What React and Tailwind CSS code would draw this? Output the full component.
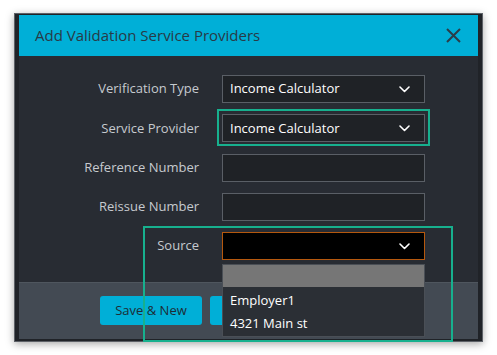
import React from 'react';

const font = { fontFamily: '"Open Sans", "Noto Sans", sans-serif' };

function Chevron() {
  return (
    <svg width="11" height="7" viewBox="0 0 11 7" fill="none" className="shrink-0">
      <path d="M1 1l4.5 4.5L10 1" stroke="#ffffff" strokeWidth="1.6" strokeLinecap="round" strokeLinejoin="round" />
    </svg>
  );
}

function Select({ value, open }) {
  return (
    <div
      className={`flex h-[28px] items-center justify-between pl-[7px] pr-[14px] text-[13px] font-medium text-white ${
        open ? 'bg-black border border-[#b5580e]' : 'bg-[#1f2226] border border-[#5a5f66]'
      }`}
    >
      <span>{value}</span>
      <Chevron />
    </div>
  );
}

function Field({ label, children }) {
  return (
    <>
      <div className="text-right text-[13px] text-[#c6cacf]">{label}</div>
      {children}
    </>
  );
}

export default function App() {
  return (
    <div className="min-h-[355px] w-[497px] bg-white pt-[13px]" style={font}>
      <div className="relative ml-[14px] w-[469px] border border-[#5d6167] bg-[#202328] px-[4px] pt-[1px] pb-[2px] shadow-[0_2px_8px_rgba(0,0,0,0.35)]">
        <div className="w-[459px]">
          <div className="flex h-[41px] items-center justify-between bg-[#00afd7] pl-[16px] pr-[17px]">
            <span className="text-[15px] text-[#283a46]">Add Validation Service Providers</span>
            <svg width="15" height="15" viewBox="0 0 15 15" fill="none">
              <path d="M1 1l13 13M14 1L1 14" stroke="#2b3d48" strokeWidth="2" />
            </svg>
          </div>

          <div className="h-[226px] bg-[#282c33] pt-[19px]">
            <div className="grid grid-cols-[180px_203px] items-center gap-x-[23px] gap-y-[11.25px]">
              <Field label="Verification Type">
                <Select value="Income Calculator" />
              </Field>
              <Field label="Service Provider">
                <Select value="Income Calculator" />
              </Field>
              <Field label="Reference Number">
                <div className="h-[28px] border border-[#5a5f66] bg-[#1f2226]" />
              </Field>
              <Field label="Reissue Number">
                <div className="h-[28px] border border-[#5a5f66] bg-[#1f2226]" />
              </Field>
              <Field label="Source">
                <div className="relative z-10">
                  <Select value="" open />
                  <div className="absolute left-0 top-[32px] w-[203px] border border-[#4a4f56] bg-[#2b2f35] text-[13px] font-medium text-white">
                    <div className="h-[22px] bg-[#767676]" />
                    <div className="flex h-[25px] items-center pl-[7px] pt-[3px]">Employer1</div>
                    <div className="flex h-[24px] items-center pl-[7px]">4321 Main st</div>
                  </div>
                </div>
              </Field>
            </div>
          </div>

          <div className="flex h-[57px] gap-[8px] border-t border-[#4f565e] bg-[#434a53] pl-[81px] pt-[13px]">
            <button className="h-[29px] w-[102px] rounded-[3px] bg-[#00afd7] text-[13px] text-[#1e2c35]">Save &amp; New</button>
            <button className="h-[29px] w-[100px] rounded-[3px] bg-[#00afd7]" aria-label="Save" />
          </div>
        </div>

        <div className="pointer-events-none absolute left-[202px] top-[95px] h-[37px] w-[213px] border-2 border-[#17b08e]" />
        <div className="pointer-events-none absolute left-[128px] top-[212px] z-20 h-[116px] w-[310px] border-2 border-[#17b08e]" />
      </div>
    </div>
  );
}
